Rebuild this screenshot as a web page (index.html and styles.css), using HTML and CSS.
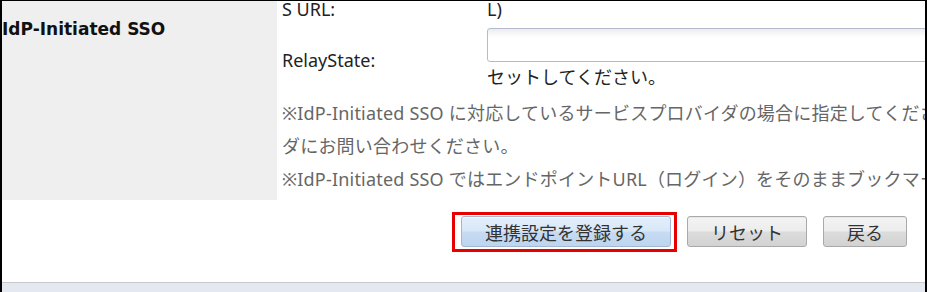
FILE: index.html
```html
<!DOCTYPE html>
<html>
<head lang="ja">
    <meta charset="UTF-8">
    <title>IdP-Initiated SSO</title>
    <link rel="stylesheet" href="styles.css">
</head>
<body>

    <div class="frame">
        <div class="detail">
            <div class="detail-head">IdP-Initiated SSO</div>
            <div class="detail-body">
                <div class="form">
                    <div class="form-label">S URL:</div>
                    <div class="form-value">L)</div>

                    <div class="form-label relay">RelayState:</div>
                    <div class="form-value">
                        <input type="text" class="text-input" value=""/>
                        <div class="hint">セットしてください。</div>
                    </div>
                </div>
                <div class="notes">
                    <p>※IdP-Initiated SSO に対応しているサービスプロバイダの場合に指定してください。詳細はサービスプロバイ<br>ダにお問い合わせください。</p>
                    <p>※IdP-Initiated SSO ではエンドポイントURL（ログイン）をそのままブックマークしてご利用ください。</p>
                </div>
            </div>
        </div>

        <div class="actions">
            <span class="marked"><button class="btn btn-primary">連携設定を登録する</button></span>
            <button class="btn">リセット</button>
            <button class="btn">戻る</button>
        </div>

        <div class="footer"></div>
    </div>

</body>
</html>
```

FILE: styles.css
```css
* {
    padding: 0;
    margin: 0;
    box-sizing: border-box;
}
body {
    font-family: "Noto Sans", "Noto Sans CJK JP", sans-serif;
    font-size: 18px;
    color: #222;
    background-color: #fff;
}
.frame {
    width: 927px;
    height: 292px;
    overflow: hidden;
    border-top: 1px solid #000;
    border-left: 2px solid #000;
    border-right: 2px solid #000;
}
.detail {
    display: flex;
}
.detail-head {
    flex: 0 0 275px;
    background-color: #efefef;
    font-family: "DejaVu Sans", sans-serif;
    font-size: 17px;
    font-weight: bold;
    line-height: 24px;
    padding-top: 16px;
    color: #111;
}
.detail-body {
    flex: 1;
    min-width: 0;
    padding: 0 0 4px 5px;
}
.form {
    display: grid;
    grid-template-columns: 205px 1fr;
    margin-top: -4px;
    line-height: 24px;
}
.form-label {
    white-space: nowrap;
}
.relay {
    align-self: center;
    padding-top: 6px;
}
.text-input {
    display: block;
    width: 480px;
    height: 34px;
    margin-top: 7px;
    border: 1px solid #b3bbcf;
    border-radius: 3px;
    background: linear-gradient(#ececec, #fff 25%);
    font: inherit;
    padding: 0 6px;
}
.hint {
    line-height: 30px;
}
.notes {
    margin-top: 5px;
    color: #666;
    line-height: 33px;
    letter-spacing: 0.2px;
    white-space: nowrap;
}
.actions {
    display: flex;
    justify-content: flex-end;
    gap: 16px;
    height: 82px;
    padding: 16px 18px 0 0;
}
.marked {
    position: relative;
    display: block;
    height: 31px;
}
.marked::after {
    content: "";
    position: absolute;
    left: -9px;
    right: -6px;
    top: -4px;
    bottom: -5px;
    border: 3px solid #e60000;
}
.btn {
    display: block;
    height: 31px;
    padding: 0 23px;
    border: 1px solid #a9a9a9;
    border-radius: 3px;
    background: linear-gradient(#f4f4f4 0, #ececec 48%, #dcdcdc 52%, #d2d2d2 100%);
    box-shadow: inset 0 1px 0 #dfe9f5;
    font-family: "Noto Sans CJK JP", sans-serif;
    font-size: 18px;
    color: #333;
    cursor: pointer;
}
.btn-primary {
    border-color: #a3b6d2;
    background: linear-gradient(#e3eefb 0, #d8e7f8 48%, #c7dcf3 52%, #bdd5f0 100%);
    box-shadow: inset 0 1px 0 #f3f8fe;
}
.footer {
    height: 10px;
    border-top: 1px solid #c8c8c8;
    background-color: #e4e8f0;
}
```
